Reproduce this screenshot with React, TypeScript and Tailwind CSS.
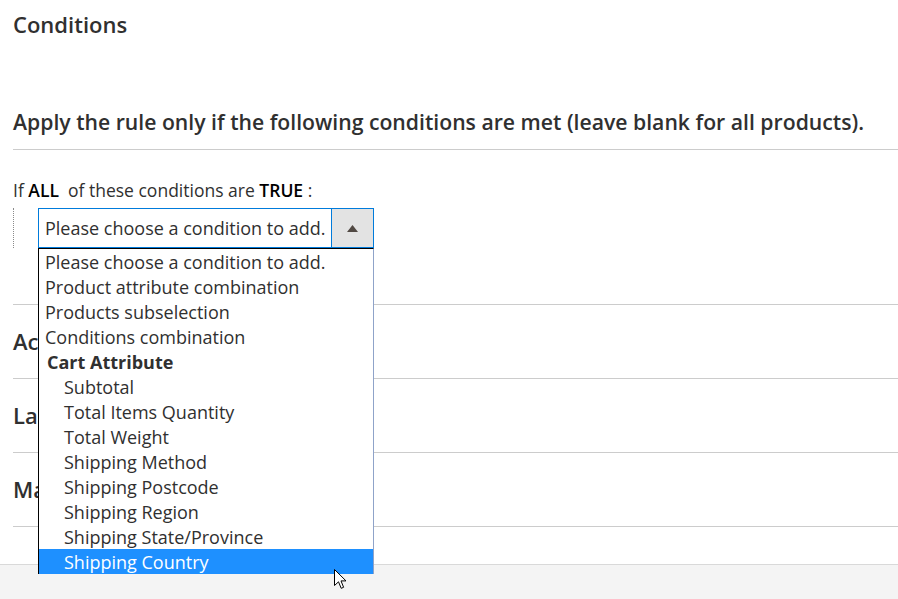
const options: { label: string; kind: 'plain' | 'group' | 'sub' | 'active' }[] = [
  { label: 'Please choose a condition to add.', kind: 'plain' },
  { label: 'Product attribute combination', kind: 'plain' },
  { label: 'Products subselection', kind: 'plain' },
  { label: 'Conditions combination', kind: 'plain' },
  { label: 'Cart Attribute', kind: 'group' },
  { label: 'Subtotal', kind: 'sub' },
  { label: 'Total Items Quantity', kind: 'sub' },
  { label: 'Total Weight', kind: 'sub' },
  { label: 'Shipping Method', kind: 'sub' },
  { label: 'Shipping Postcode', kind: 'sub' },
  { label: 'Shipping Region', kind: 'sub' },
  { label: 'Shipping State/Province', kind: 'sub' },
  { label: 'Shipping Country', kind: 'active' },
];

const sections = ['Actions', 'Labels', 'Manage Coupon Codes'];

const App: React.FC = () => {
  return (
    <div
      className="relative w-[898px] h-[599px] overflow-hidden bg-white text-[#303030] flex flex-col"
      style={{ fontFamily: '"Open Sans", "Noto Sans", sans-serif' }}
    >
      <div className="pl-[13px]">
        <div className="h-[50px] flex items-center pb-[2px]">
          <h2 className="text-[22px] leading-[30px] font-semibold text-[#303030]">Conditions</h2>
        </div>

        <div className="h-[100px] flex items-end pb-[13px] border-b border-[#cccccc]">
          <h3 className="text-[21.2px] leading-[28px] font-semibold text-[#303030] whitespace-nowrap">
            Apply the rule only if the following conditions are met (leave blank for all products).
          </h3>
        </div>

        <div className="pt-[28px] h-[52px] text-[17.5px] leading-[24px]">
          If <span className="font-semibold text-black">ALL</span>&nbsp; of these conditions are{' '}
          <span className="font-semibold text-black">TRUE</span> :
        </div>

        <div className="mt-[6px] border-l border-dotted border-[#8a8a8a] pl-[24px] h-[40px]">
          <div className="relative w-[336px]">
            <div className="flex h-[40px] border border-[#007bdb] bg-white">
              <div className="flex-1 flex items-center pl-[6px] text-[18px] text-[#303030] whitespace-nowrap">
                Please choose a condition to add.
              </div>
              <div className="w-[42px] border-l border-[#007bdb] bg-[#e3e3e3] flex items-center justify-center">
                <svg width="11" height="7" viewBox="0 0 11 7">
                  <path d="M0 7 L5.5 0 L11 7 Z" fill="#514943" />
                </svg>
              </div>
            </div>

            <ul className="absolute left-0 top-[40px] w-[336px] z-10 bg-white border-l border-t border-black border-r border-r-[#8fa3c9]">
              {options.map((o) => (
                <li
                  key={o.label}
                  className={
                    o.kind === 'group'
                      ? 'h-[25px] leading-[26px] pl-[8px] text-[18px] font-bold text-[#303030] whitespace-nowrap'
                      : o.kind === 'sub'
                      ? 'h-[25px] leading-[26px] pl-[25px] text-[18px] text-[#303030] whitespace-nowrap'
                      : o.kind === 'active'
                      ? 'h-[25px] leading-[26px] pl-[25px] text-[18px] bg-[#1e90ff] text-white whitespace-nowrap'
                      : 'h-[25px] leading-[26px] pl-[6px] text-[18px] text-[#303030] whitespace-nowrap'
                  }
                >
                  {o.label}
                </li>
              ))}
            </ul>
          </div>
        </div>

        <div className="h-[56px]" />

        {sections.map((s) => (
          <div key={s} className="h-[74px] border-t border-[#cccccc] flex items-center">
            <h3 className="text-[22px] font-semibold text-[#303030]">{s}</h3>
          </div>
        ))}
        <div className="h-[38px] border-t border-[#cccccc]" />
      </div>

      <div className="flex-1 border-t border-[#d9d9d9] bg-[#f4f4f4]" />

      <svg
        className="absolute left-[334px] top-[569px] z-20"
        width="13"
        height="21"
        viewBox="0 0 13 21"
      >
        <path
          d="M0.5 0.5 L0.5 16.5 L4.5 12.8 L7.2 19.3 L9.6 18.3 L7 11.9 L12 11.9 Z"
          fill="#ffffff"
          stroke="#000000"
          strokeWidth="1"
          strokeLinejoin="miter"
        />
      </svg>
    </div>
  );
};

export default App;
